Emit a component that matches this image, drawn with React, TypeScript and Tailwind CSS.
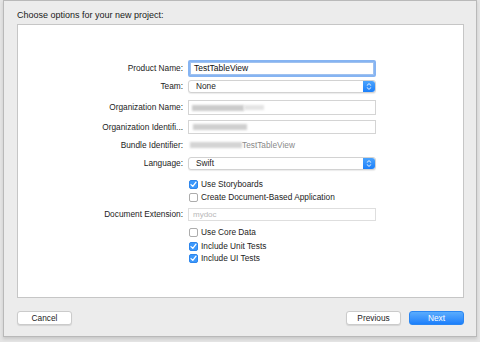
import React from "react";

const font = { fontFamily: '"Liberation Sans", Arial, Helvetica, sans-serif' };

function Check({ checked }: { checked: boolean }) {
  return checked ? (
    <div className="w-[9px] h-[9px] rounded-[2px] bg-[#3c98fb] border border-[#2e86ec] flex items-center justify-center">
      <svg width="7" height="7" viewBox="0 0 7 7">
        <path d="M1 3.6 L2.8 5.4 L6 1.2" fill="none" stroke="#fff" strokeWidth="1.3" strokeLinecap="round" strokeLinejoin="round" />
      </svg>
    </div>
  ) : (
    <div className="w-[9px] h-[9px] rounded-[2px] bg-white border border-[#acacac]" />
  );
}

function Stepper() {
  return (
    <div className="w-[12px] h-full rounded-r-[3px] bg-gradient-to-b from-[#4aa3fd] to-[#1a7ffa] flex flex-col items-center justify-center gap-[1px]">
      <svg width="6" height="3" viewBox="0 0 6 3">
        <path d="M0.8 2.6 L3 0.6 L5.2 2.6" fill="none" stroke="#fff" strokeWidth="0.9" />
      </svg>
      <svg width="6" height="3" viewBox="0 0 6 3">
        <path d="M0.8 0.4 L3 2.4 L5.2 0.4" fill="none" stroke="#fff" strokeWidth="0.9" />
      </svg>
    </div>
  );
}

function Row({ label, children, className }: { label?: string; children: React.ReactNode; className: string }) {
  return (
    <div className={`flex items-center ${className}`}>
      <div className="w-[166px] pr-[1px] text-right text-[8.3px] text-[#1c1c1c] whitespace-nowrap">{label}</div>
      <div className="ml-[4px] w-[188px] h-full flex items-center">{children}</div>
    </div>
  );
}

function CheckRow({ checked, text, className }: { checked: boolean; text: string; className: string }) {
  return (
    <Row className={className}>
      <div className="ml-[1px] flex items-center gap-[3px]">
        <Check checked={checked} />
        <span className="text-[8.3px] text-[#1c1c1c] whitespace-nowrap">{text}</span>
      </div>
    </Row>
  );
}

export default function App() {
  return (
    <div className="w-[480px] h-[342px] bg-[#e4e4e4] pl-[3px] pr-[3px] pb-[5px]" style={font}>
      <div className="h-full bg-[#ececec] border border-[#b9b9b9] flex flex-col shadow-[0_2px_3px_rgba(0,0,0,0.12)]">
        <div className="pl-[13px] pt-[9px] h-[23px] text-[9px] text-[#1a1a1a] leading-[11px]">
          Choose options for your new project:
        </div>
        <div className="ml-[13px] mr-[12px] h-[274px] bg-white border border-[#c6c6c6] flex flex-col pt-[35px]">
          <Row label="Product Name:" className="h-[17px]">
            <div className="w-full h-full rounded-[2px] border-[2px] border-[#86b4f2] flex items-center">
              <div className="w-full h-full border border-[#9fc1ef] bg-white flex items-center pl-[3px] text-[8.5px] text-[#111]">
                TestTableView
              </div>
            </div>
          </Row>
          <Row label="Team:" className="h-[13px] mt-[3px]">
            <div className="w-full h-full rounded-[3px] bg-white border border-[#d2d2d2] shadow-[0_1px_1px_rgba(0,0,0,0.08)] flex items-center">
              <span className="flex-1 pl-[7px] text-[8.3px] text-[#1c1c1c]">None</span>
              <Stepper />
            </div>
          </Row>
          <Row label="Organization Name:" className="h-[15px] mt-[7px]">
            <div className="w-full h-full bg-white border border-[#d4d4d4] flex items-center pl-[3px]">
              <div className="h-[6px] w-[52px] bg-[#cbcbcb] blur-[1px]" />
              <div className="h-[5px] w-[20px] bg-[#e4e4e4] blur-[1px]" />
            </div>
          </Row>
          <Row label="Organization Identifi..." className="h-[14px] mt-[5px]">
            <div className="w-full h-full bg-white border border-[#d4d4d4] flex items-center pl-[4px]">
              <div className="h-[6px] w-[54px] bg-[#cfcfcf] blur-[1px]" />
            </div>
          </Row>
          <Row label="Bundle Identifier:" className="h-[12px] mt-[5px]">
            <div className="flex items-center pl-[2px]">
              <div className="h-[6px] w-[52px] bg-[#d4d4d4] blur-[1px]" />
              <span className="text-[8.3px] text-[#8a8a8a]">TestTableView</span>
            </div>
          </Row>
          <Row label="Language:" className="h-[13px] mt-[6px]">
            <div className="w-full h-full rounded-[3px] bg-white border border-[#d2d2d2] shadow-[0_1px_1px_rgba(0,0,0,0.08)] flex items-center">
              <span className="flex-1 pl-[7px] text-[8.3px] text-[#1c1c1c]">Swift</span>
              <Stepper />
            </div>
          </Row>
          <CheckRow checked text="Use Storyboards" className="h-[12px] mt-[8px]" />
          <CheckRow checked={false} text="Create Document-Based Application" className="h-[12px] mt-[1px]" />
          <Row label="Document Extension:" className="h-[13px] mt-[5px]">
            <div className="w-full h-full bg-white border border-[#dedede] flex items-center pl-[4px] text-[8px] text-[#b8b8b8]">
              mydoc
            </div>
          </Row>
          <CheckRow checked={false} text="Use Core Data" className="h-[12px] mt-[5px]" />
          <CheckRow checked text="Include Unit Tests" className="h-[12px] mt-[2px]" />
          <CheckRow checked text="Include UI Tests" className="h-[12px]" />
        </div>
        <div className="flex items-center mt-[13px] pl-[13px] pr-[12px]">
          <div className="w-[55px] h-[14px] rounded-[3px] bg-white border border-[#cbcbcb] shadow-[0_1px_1px_rgba(0,0,0,0.1)] flex items-center justify-center text-[8.3px] text-[#1c1c1c]">
            Cancel
          </div>
          <div className="flex-1" />
          <div className="w-[55px] h-[14px] rounded-[3px] bg-white border border-[#cbcbcb] shadow-[0_1px_1px_rgba(0,0,0,0.1)] flex items-center justify-center text-[8.3px] text-[#1c1c1c]">
            Previous
          </div>
          <div className="ml-[8px] w-[55px] h-[14px] rounded-[3px] bg-gradient-to-b from-[#5aacfd] to-[#1b7ffb] border border-[#2a86f2] flex items-center justify-center text-[8.3px] text-white">
            Next
          </div>
        </div>
      </div>
    </div>
  );
}
